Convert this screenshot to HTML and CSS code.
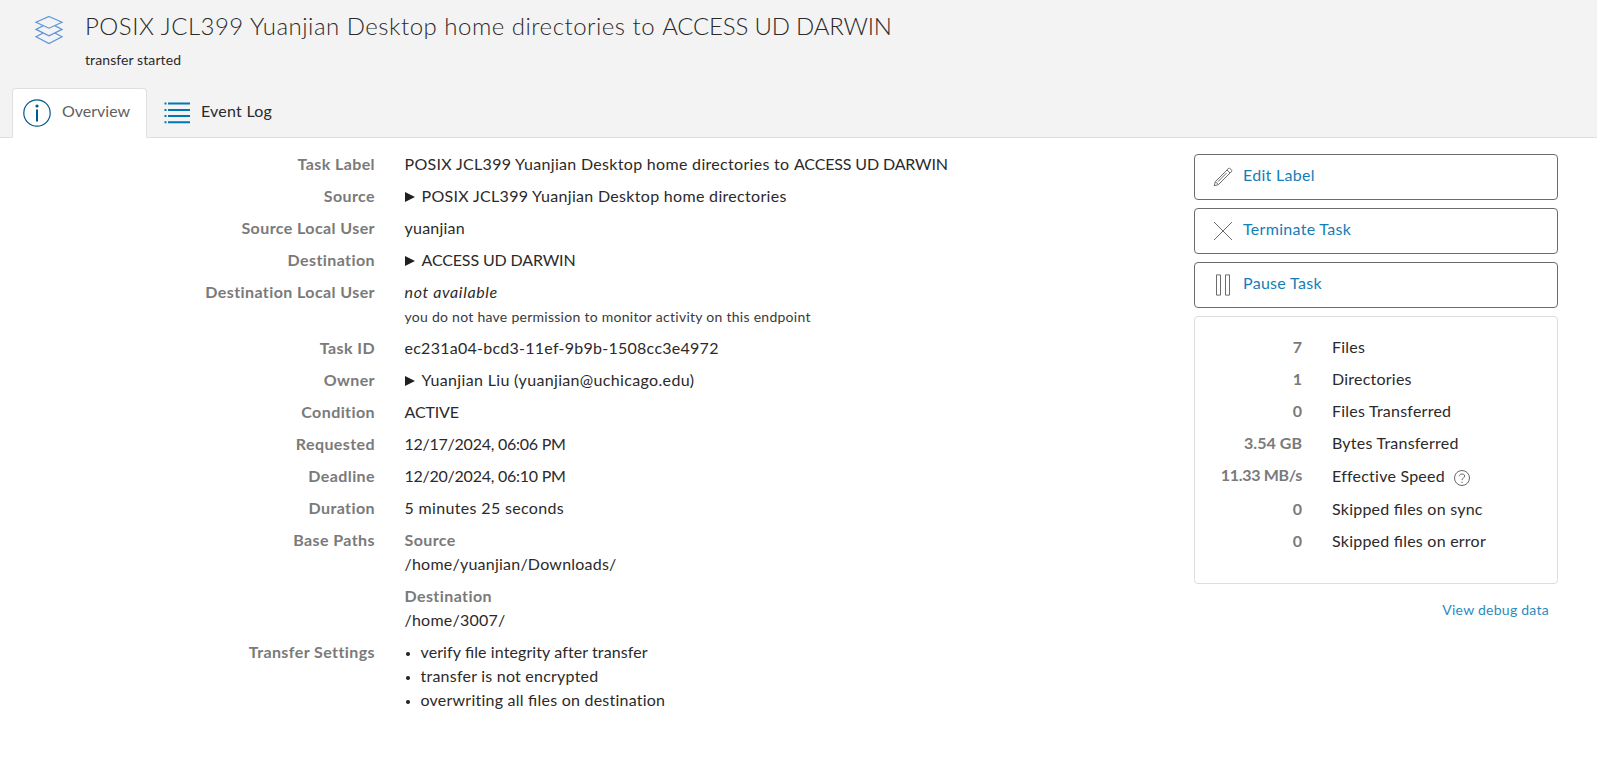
FILE: index.html
```
<!DOCTYPE html>
<html lang="en">
<head>
<meta charset="utf-8">
<title>Task Overview</title>
<link rel="stylesheet" href="styles.css">
</head>
<body>
<header class="page-header">
  <div class="heading">
    <svg class="layers-icon" width="30" height="30" viewBox="0 0 30 30">
      <path d="M15 1.5 28 7.2 15 13.2 2 7.2Z"/>
      <path d="M9.2 10.6 2 14.4 15 20.8 28 14.4 20.8 10.6"/>
      <path d="M9.2 18 2 21.8 15 28.6 28 21.8 20.8 18"/>
    </svg>
    <div>
      <h1 class="title">POSIX JCL399 Yuanjian Desktop home directories to <span class="title-caps">ACCESS UD DARWIN</span></h1>
      <p class="status">transfer started</p>
    </div>
  </div>
  <nav class="tabs">
    <a class="tab tab-active">
      <svg class="info-icon" width="28" height="28" viewBox="0 0 28 28">
        <circle class="ring" cx="14" cy="14" r="13.2"/>
        <circle class="dot" cx="14" cy="7" r="1.6"/>
        <path class="stem" d="M14 10.5V22.5"/>
      </svg>
      <span class="tab-text tab-overview">Overview</span>
    </a>
    <a class="tab">
      <svg class="list-icon" width="26" height="24" viewBox="0 0 26 24">
        <path d="M4 2.6H26M4 9H26M4 15H26M4 21.3H26"/>
        <path d="M.5 2.6H2.5M.5 9H2.5M.5 15H2.5M.5 21.3H2.5"/>
      </svg>
      <span class="tab-text">Event Log</span>
    </a>
  </nav>
</header>
<main class="content">
  <dl class="details">
    <dt>Task Label</dt><dd class="wide">POSIX JCL399 Yuanjian Desktop home directories to <span class="caps">ACCESS UD DARWIN</span></dd>
    <dt>Source</dt><dd class="expandable wide"><svg class="marker" width="10" height="10" viewBox="0 0 10 10"><path d="M0 0 10 5 0 10Z"/></svg>POSIX JCL399 Yuanjian Desktop home directories</dd>
    <dt>Source Local User</dt><dd>yuanjian</dd>
    <dt>Destination</dt><dd class="expandable caps"><svg class="marker" width="10" height="10" viewBox="0 0 10 10"><path d="M0 0 10 5 0 10Z"/></svg>ACCESS UD DARWIN</dd>
    <dt>Destination Local User</dt><dd><em>not available</em><div class="note">you do not have permission to monitor activity on this endpoint</div></dd>
    <dt>Task ID</dt><dd class="task-id">ec231a04-bcd3-11ef-9b9b-1508cc3e4972</dd>
    <dt>Owner</dt><dd class="expandable wider"><svg class="marker" width="10" height="10" viewBox="0 0 10 10"><path d="M0 0 10 5 0 10Z"/></svg>Yuanjian Liu (yuanjian@uchicago.edu)</dd>
    <dt>Condition</dt><dd class="caps">ACTIVE</dd>
    <dt>Requested</dt><dd class="date">12/17/2024, 06:06 PM</dd>
    <dt>Deadline</dt><dd class="date">12/20/2024, 06:10 PM</dd>
    <dt>Duration</dt><dd class="wider">5 minutes 25 seconds</dd>
    <dt>Base Paths</dt>
    <dd class="paths">
      <div><strong>Source</strong><br>/home/yuanjian/Downloads/</div>
      <div><strong>Destination</strong><br>/home/3007/</div>
    </dd>
    <dt>Transfer Settings</dt>
    <dd>
      <ul class="settings">
        <li class="first">verify <span class="lig">fi</span>le integrity after transfer</li>
        <li>transfer is not encrypted</li>
        <li>overwriting all <span class="lig">fi</span>les on destination</li>
      </ul>
    </dd>
  </dl>
  <aside class="sidebar">
    <button class="action"><svg width="20" height="20" viewBox="0 0 20 20"><path d="M1.2 18.8 2.4 14.6 14 3 17 6 5.4 17.6ZM2.4 14.6 5.4 17.6M13.6 3.4 15.2 1.6Q16.4.6 17.8 2.2Q19.4 3.6 18.4 4.8L16.8 6.4M5 14.6 13.6 6"/></svg>Edit Label</button>
    <button class="action"><svg width="20" height="20" viewBox="0 0 20 20"><path d="M1 1 19 19M19 1 1 19"/></svg>Terminate Task</button>
    <button class="action"><svg width="20" height="22" viewBox="0 0 20 22"><path d="M3.5.9H7.5V21.1H3.5ZM12.5.9H16.5V21.1H12.5Z"/></svg>Pause Task</button>
    <dl class="stats">
      <dt>7</dt><dd>Files</dd>
      <dt>1</dt><dd>Directories</dd>
      <dt>0</dt><dd>Files Transferred</dd>
      <dt>3.54 GB</dt><dd>Bytes Transferred</dd>
      <dt class="speed">11.33 MB/s</dt>
      <dd class="speed-label">Effective Speed
        <svg width="16" height="16" viewBox="0 0 16 16"><circle cx="8" cy="8" r="7.5"/><path d="M5.3 6.2C5.3 3.3 10.7 3.3 10.7 6.1C10.7 8 8 7.9 8 10M8 11.7V13"/></svg>
      </dd>
      <dt>0</dt><dd>Skipped <span class="lig">fi</span>les on sync</dd>
      <dt>0</dt><dd>Skipped <span class="lig">fi</span>les on error</dd>
    </dl>
    <a class="debug">View debug data</a>
  </aside>
</main>
</body>
</html>
```
FILE: styles.css
```
* { box-sizing: border-box; }
body {
  margin: 0;
  background: #fff;
  color: #2c292a;
  font: 16px/24px Lato, "Open Sans", sans-serif;
  letter-spacing: 0.23px;
}
h1, p, dl, dd, ul { margin: 0; padding: 0; }
svg { flex: none; fill: none; }
.lig { font-feature-settings: "liga" 1; }

.page-header {
  height: 138px;
  background: #f3f3f3;
  border-bottom: 1px solid #dfdfe3;
  display: flex;
  flex-direction: column;
  justify-content: space-between;
}
.heading { display: flex; gap: 21px; padding: 11px 0 0 34px; }
.layers-icon { margin-top: 4px; stroke: #5b95d9; stroke-width: 1.2; }
.title { font-size: 24px; line-height: 30px; font-weight: 300; letter-spacing: 0.5px; }
.title-caps { letter-spacing: -0.2px; }
.status { margin-top: 9px; font-size: 14px; line-height: 20px; letter-spacing: 0.09px; }

.tabs { display: flex; padding-left: 12px; margin-bottom: -1px; }
.tab { display: flex; align-items: center; height: 50px; padding: 0 16px; gap: 11px; border: 1px solid transparent; }
.tab-active {
  width: 135px;
  padding: 0 0 0 10px;
  background: #fff;
  border-color: #dfdfe3;
  border-bottom-color: #fff;
  border-radius: 4px 4px 0 0;
}
.tab-text { margin-top: -4px; }
.tab-overview { color: #5f6062; letter-spacing: 0; }
.info-icon .ring { stroke: #00598c; stroke-width: 1.2; }
.info-icon .dot { fill: #00598c; }
.info-icon .stem { stroke: #00598c; stroke-width: 2; }
.list-icon { stroke: #0077b5; stroke-width: 2; }

.content { display: flex; justify-content: space-between; padding: 14px 39px 0 0; }
.details { display: grid; grid-template-columns: 375px 1fr; column-gap: 29.5px; row-gap: 8px; align-content: start; }
dt, strong { font-weight: 700; color: #7a7a7a; letter-spacing: 0.41px; }
dt { text-align: right; }
em { letter-spacing: 0.65px; }
.expandable { display: flex; align-items: center; gap: 7px; }
.marker { margin-top: 1px; fill: #231f20; }
.wide { letter-spacing: 0.31px; }
.task-id { letter-spacing: 0.26px; }
.wider { letter-spacing: 0.34px; }
.caps { letter-spacing: -0.14px; }
.date { letter-spacing: -0.25px; }
.note { font-size: 14px; line-height: 26px; margin-bottom: -2px; letter-spacing: 0.27px; color: #3c393a; }
.paths { display: grid; gap: 8px; }
.settings { padding-left: 16px; list-style: none; }
.settings li::before {
  content: "";
  display: inline-block;
  width: 4px;
  height: 4px;
  margin: 0 11px 2px -15px;
  border-radius: 50%;
  background: #231f20;
}
.settings .first { letter-spacing: 0.1px; }

.sidebar { width: 364px; margin-top: 2px; display: flex; flex-direction: column; gap: 8px; }
.action {
  display: flex;
  align-items: center;
  gap: 10px;
  height: 46px;
  padding: 0 0 4px 18px;
  border: 1px solid #6b6b6e;
  border-radius: 4px;
  background: #fff;
  color: #147eb8;
  font: inherit;
  letter-spacing: 0.3px;
}
.action svg { margin-top: 4px; stroke: #6c6c6c; stroke-width: 1; }
.stats {
  height: 268px;
  padding: 18px 0 0;
  border: 1px solid #ddd;
  border-radius: 4px;
  display: grid;
  grid-template-columns: 107px 1fr;
  column-gap: 30px;
  row-gap: 8px;
  align-content: start;
}
.stats dt { letter-spacing: 0.05px; }
.stats .speed { letter-spacing: -0.3px; }
.speed-label { display: flex; align-items: center; gap: 9px; height: 26px; }
.speed-label svg { margin-top: 3px; stroke: #666; }
.debug { align-self: flex-end; margin: 6px 9px 0 0; font-size: 14px; letter-spacing: 0.26px; color: #2a8cc0; }
```
